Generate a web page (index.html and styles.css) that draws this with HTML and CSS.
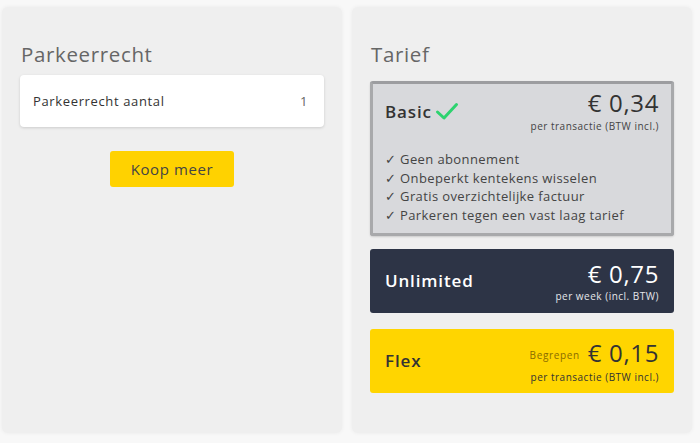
FILE: index.html
```html
<!DOCTYPE html>
<html lang="nl">
<head>
<meta charset="utf-8">
<link rel="stylesheet" href="styles.css">
</head>
<body>
<div class="page">
  <section class="panel">
    <h2 class="title">Parkeerrecht</h2>
    <div class="count-card">
      <span class="count-label">Parkeerrecht aantal</span>
      <span class="count-value">1</span>
    </div>
    <div class="btn-row"><button class="btn">Koop meer</button></div>
  </section>
  <section class="panel">
    <h2 class="title title-tarief">Tarief</h2>
    <div class="plan plan-basic">
      <div class="plan-head">
        <div class="plan-name">Basic
          <svg class="check" width="24" height="19" viewBox="0 0 24 19"><path d="M2.5 10 L9 16 L21.5 2.5" fill="none" stroke="#2dd36f" stroke-width="3" stroke-linecap="round" stroke-linejoin="round"/></svg>
        </div>
        <div class="plan-price">
          <div class="price">€ 0,34</div>
          <div class="price-note">per transactie (BTW incl.)</div>
        </div>
      </div>
      <ul class="features">
        <li>✓ Geen abonnement</li>
        <li>✓ Onbeperkt kentekens wisselen</li>
        <li>✓ Gratis overzichtelijke factuur</li>
        <li>✓ Parkeren tegen een vast laag tarief</li>
      </ul>
    </div>
    <div class="plan plan-unlimited">
      <div class="plan-head">
        <div class="plan-name">Unlimited</div>
        <div class="plan-price">
          <div class="price">€ 0,75</div>
          <div class="price-note">per week (incl. BTW)</div>
        </div>
      </div>
    </div>
    <div class="plan plan-flex">
      <div class="plan-head">
        <div class="plan-name">Flex</div>
        <div class="plan-price">
          <div class="price"><span class="tag">Begrepen</span>€ 0,15</div>
          <div class="price-note">per transactie (BTW incl.)</div>
        </div>
      </div>
    </div>
  </section>
</div>
</body>
</html>
```
FILE: styles.css
```css
* { box-sizing: border-box; }
html, body { margin: 0; padding: 0; }
body {
  background: #f8f8f8;
  font-family: "Open Sans", "DejaVu Sans", sans-serif;
  letter-spacing: 0.04em;
  color: #333;
  width: 700px;
  height: 443px;
  overflow: hidden;
}
.page {
  display: flex;
  gap: 10px;
  padding: 7px 8px 10px 2px;
  height: 443px;
}
.panel {
  flex: 1;
  background: #efefef;
  border-radius: 6px;
  box-shadow: 0 0 4px rgba(0,0,0,0.06);
  padding: 33px 18px 18px;
  display: flex;
  flex-direction: column;
}
.title {
  margin: 0 0 7px 1px;
  font-size: 20.5px;
  font-weight: 400;
  color: #666;
  line-height: 28px;
}
.title-tarief { margin-bottom: 13px; }
.count-card {
  background: #fff;
  border-radius: 4px;
  box-shadow: 0 1px 3px rgba(0,0,0,0.15);
  height: 52px;
  display: flex;
  align-items: center;
  justify-content: space-between;
  padding: 0 16px 0 13px;
}
.count-label { font-size: 13px; font-weight: 500; color: #333; }
.count-value { font-size: 13px; color: #666; }
.btn-row { display: flex; justify-content: center; margin-top: 24px; }
.btn {
  font-family: inherit;
  letter-spacing: 0.04em;
  background: #ffd200;
  border: none;
  border-radius: 3px;
  width: 124px;
  height: 36px;
  font-size: 15px;
  color: #444;
  padding: 0;
}
.plan {
  border-radius: 3px;
  padding: 0 15px;
  margin-bottom: 14px;
}
.plan-flex { margin-bottom: 0; margin-top: 2px; }
.plan-head {
  display: flex;
  justify-content: space-between;
  align-items: center;
  height: 64px;
}
.plan-name {
  font-size: 17px;
  font-weight: 600;
  letter-spacing: 0.05em;
  display: flex;
  align-items: center;
  gap: 3px;
}
.plan-price { text-align: right; }
.price {
  font-size: 24px;
  line-height: 30px;
  font-weight: 400;
}
.price-note { font-size: 10px; line-height: 14px; letter-spacing: 0.05em; }
.tag { font-size: 10px; margin-right: 8px; color: #8a6c00; vertical-align: middle; }
.plan-basic {
  background: #d8d9dc;
  border: 3px solid #a8a9ab;
  border-top-color: #9c9da0;
  padding: 0 12px;
  box-shadow: 0 1px 2px rgba(0,0,0,0.15);
  margin-bottom: 13px;
}
.plan-basic .plan-head { height: 56px; align-items: flex-start; padding-top: 4px; }
.plan-basic .plan-name { margin-top: 12px; color: #333; }
.plan-basic .price { color: #333; }
.plan-basic .price-note { color: #444; line-height: 16px; }
.features {
  list-style: none;
  margin: 10px 0 8px;
  padding: 0;
  font-size: 13px;
  line-height: 18.7px;
  letter-spacing: 0.03em;
  color: #444;
}
.plan-unlimited { background: #2d3446; color: #fff; }
.plan-unlimited .price-note { color: #e5e6ea; }
.plan-flex { background: #ffd500; color: #333; }
```
